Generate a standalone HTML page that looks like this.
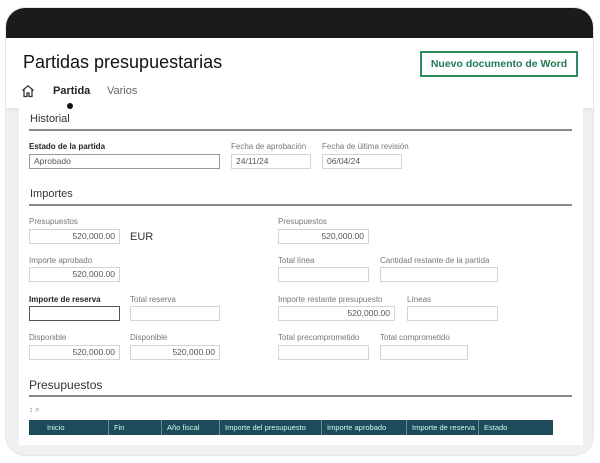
<!DOCTYPE html>
<html><head><meta charset="utf-8"><style>
*{box-sizing:border-box;margin:0;padding:0}
body{width:600px;height:463px;background:#fff;font-family:"Liberation Sans",sans-serif;position:relative;overflow:hidden;color:#222}
.frame{position:absolute;left:5px;top:7px;width:589px;height:449px;border-radius:20px;background:#eef0f2;overflow:hidden;border:1px solid #e4e6e8}
.bar{position:absolute;left:0;top:0;right:0;height:30px;background:#1b1b1b}
.hdr{position:absolute;left:0;top:30px;right:0;height:70px;background:#fff;box-shadow:0 2px 3px rgba(0,0,0,.06)}
.panel{position:absolute;left:13px;top:100px;width:564px;height:337px;background:#fff}
.a{position:absolute;white-space:nowrap}
.lbl{position:absolute;font-size:8px;color:#777;white-space:nowrap}
.lbl.b{color:#222;font-weight:bold}
.in{position:absolute;height:15px;border:1px solid #d4d4d4;font-size:8.5px;color:#555;line-height:13px;padding:0 4px;background:#fff}
.r{text-align:right}
.sec{position:absolute;font-size:11px;color:#333}
.line{position:absolute;left:29px;width:543px;height:2px;background:#8a8a8a}
.th{position:absolute;top:420px;height:15px;background:#1f4a5c;font-size:7.5px;color:#cfe;line-height:15px;padding-left:5px;border-right:1px solid #6a8a98}
</style></head><body>
<div class="frame"><div class="bar"></div><div class="hdr"></div><div class="panel"></div></div>
<div class="a" style="left:23px;top:52px;font-size:18px;color:#111">Partidas presupuestarias</div>
<div class="a" style="left:420px;top:51px;width:158px;height:26px;border:2px solid #2a8c5e;color:#1f7a4f;font-size:10.5px;font-weight:bold;text-align:center;line-height:22px">Nuevo documento de Word</div>
<svg class="a" style="left:21px;top:84px" width="14" height="14" viewBox="0 0 14 14"><path d="M1.5 6.5 7 1.8l5.5 4.7M3 5.5V12.5h3V9h2v3.5h3V5.5" fill="none" stroke="#333" stroke-width="1.3"/></svg>
<div class="a" style="left:53px;top:85px;font-size:11px;font-weight:bold;color:#222">Partida</div>
<div class="a" style="left:107px;top:85px;font-size:11px;color:#666">Varios</div>
<div class="a" style="left:67px;top:103px;width:6px;height:6px;border-radius:3px;background:#111"></div>

<div class="sec" style="left:30px;top:113px">Historial</div><div class="line" style="top:129px"></div>
<div class="lbl b" style="left:29px;top:142px">Estado de la partida</div>
<div class="in" style="left:29px;top:154px;width:191px;border-color:#999">Aprobado</div>
<div class="lbl" style="left:231px;top:142px">Fecha de aprobación</div>
<div class="in" style="left:231px;top:154px;width:80px">24/11/24</div>
<div class="lbl" style="left:322px;top:142px">Fecha de última revisión</div>
<div class="in" style="left:322px;top:154px;width:80px">06/04/24</div>

<div class="sec" style="left:30px;top:188px">Importes</div><div class="line" style="top:204px"></div>
<div class="lbl" style="left:29px;top:217px">Presupuestos</div>
<div class="in r" style="left:29px;top:229px;width:91px">520,000.00</div>
<div class="a" style="left:130px;top:231px;font-size:11px;color:#333">EUR</div>
<div class="lbl" style="left:278px;top:217px">Presupuestos</div>
<div class="in r" style="left:278px;top:229px;width:91px">520,000.00</div>

<div class="lbl" style="left:29px;top:256px">Importe aprobado</div>
<div class="in r" style="left:29px;top:267px;width:91px">520,000.00</div>
<div class="lbl" style="left:278px;top:256px">Total línea</div>
<div class="in" style="left:278px;top:267px;width:91px"></div>
<div class="lbl" style="left:380px;top:256px">Cantidad restante de la partida</div>
<div class="in" style="left:380px;top:267px;width:118px"></div>

<div class="lbl b" style="left:29px;top:295px">Importe de reserva</div>
<div class="in" style="left:29px;top:306px;width:91px;border-color:#555"></div>
<div class="lbl" style="left:130px;top:295px">Total reserva</div>
<div class="in" style="left:130px;top:306px;width:90px"></div>
<div class="lbl" style="left:278px;top:295px">Importe restante presupuesto</div>
<div class="in r" style="left:278px;top:306px;width:117px">520,000.00</div>
<div class="lbl" style="left:407px;top:295px">Líneas</div>
<div class="in" style="left:407px;top:306px;width:91px"></div>

<div class="lbl" style="left:29px;top:333px">Disponible</div>
<div class="in r" style="left:29px;top:345px;width:91px">520,000.00</div>
<div class="lbl" style="left:130px;top:333px">Disponible</div>
<div class="in r" style="left:130px;top:345px;width:90px">520,000.00</div>
<div class="lbl" style="left:278px;top:333px">Total precomprometido</div>
<div class="in" style="left:278px;top:345px;width:91px"></div>
<div class="lbl" style="left:380px;top:333px">Total comprometido</div>
<div class="in" style="left:380px;top:345px;width:88px"></div>

<div class="sec" style="left:29px;top:378px;font-size:12px">Presupuestos</div><div class="line" style="top:395px"></div>
<div class="a" style="left:29px;top:405px;font-size:8px;color:#888">↕ ⌕</div>
<div class="th" style="left:29px;width:80px;padding-left:18px">Inicio</div>
<div class="th" style="left:109px;width:53px">Fin</div>
<div class="th" style="left:162px;width:58px">Año fiscal</div>
<div class="th" style="left:220px;width:102px">Importe del presupuesto</div>
<div class="th" style="left:322px;width:85px">Importe aprobado</div>
<div class="th" style="left:407px;width:72px">Importe de reserva</div>
<div class="th" style="left:479px;width:74px;border-right:none">Estado</div>
</body></html>
